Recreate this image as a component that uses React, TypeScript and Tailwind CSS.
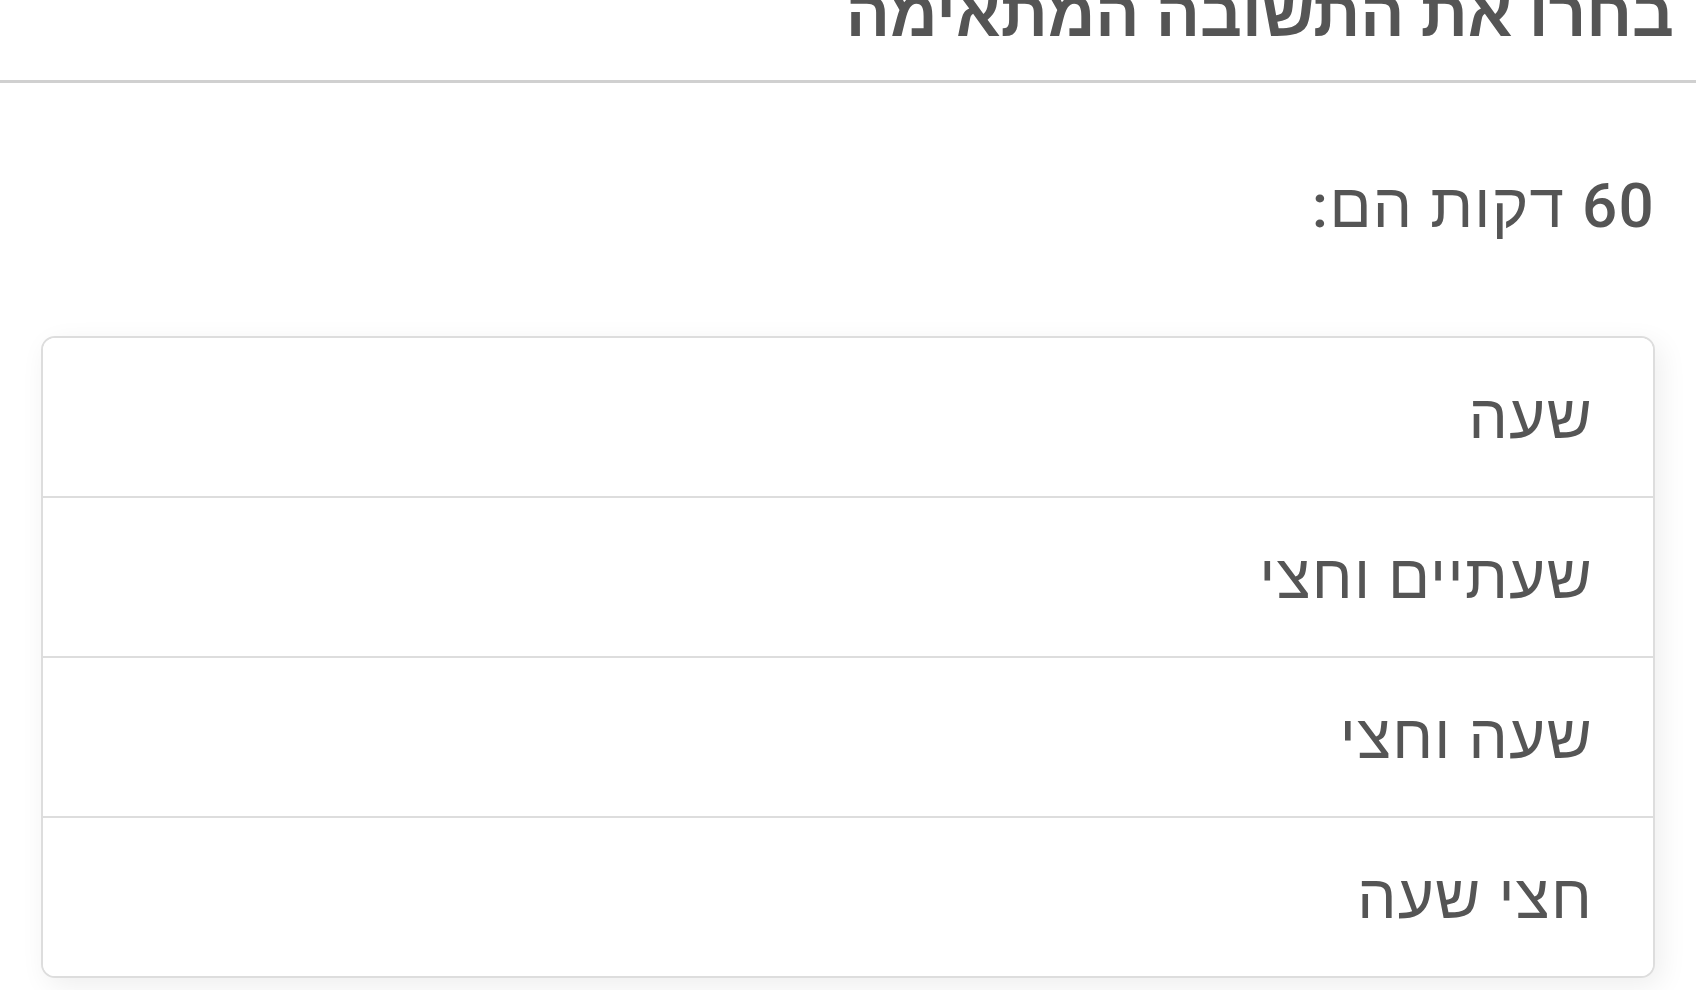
import { FC } from "react";

interface IOption {
  id: number;
  label: string;
}

const options: IOption[] = [
  { id: 1, label: "שעה" },
  { id: 2, label: "שעתיים וחצי" },
  { id: 3, label: "שעה וחצי" },
  { id: 4, label: "חצי שעה" },
];

const OptionRow: FC<{ option: IOption; last: boolean }> = ({ option, last }) => (
  <button
    className={`flex h-[158px] w-full items-center bg-white pr-[60px] text-right text-[62px] font-medium leading-none tracking-[1.3px] text-[#555] ${
      last ? "" : "border-b-2 border-[#dddddd]"
    } box-content`}
  >
    {option.label}
  </button>
);

const App: FC = () => {
  return (
    <div
      dir="rtl"
      className="h-[990px] w-full overflow-hidden bg-white"
      style={{ fontFamily: "Roboto, 'Noto Sans', sans-serif" }}
    >
      {/* title bar, partly scrolled out of view */}
      <div className="h-[83px] overflow-hidden border-b-[3px] border-[#d0d0d0] pr-[22px]">
        <h1 className="mt-[-19px] text-[65.5px] font-bold leading-none text-[#555]">
          בחרו את התשובה המתאימה
        </h1>
      </div>

      <div className="px-[41px]">
        <p className="pt-[92px] text-[62px] font-medium leading-none tracking-[1.3px] text-[#555]">
          60 דקות הם:
        </p>

        <div className="mt-[99px] overflow-hidden rounded-[14px] border-2 border-[#dddddd] bg-white shadow-[6px_8px_28px_rgba(0,0,0,0.07)]">
          {options.map((option, idx) => (
            <OptionRow key={option.id} option={option} last={idx === options.length - 1} />
          ))}
        </div>
      </div>
    </div>
  );
};

export default App;
